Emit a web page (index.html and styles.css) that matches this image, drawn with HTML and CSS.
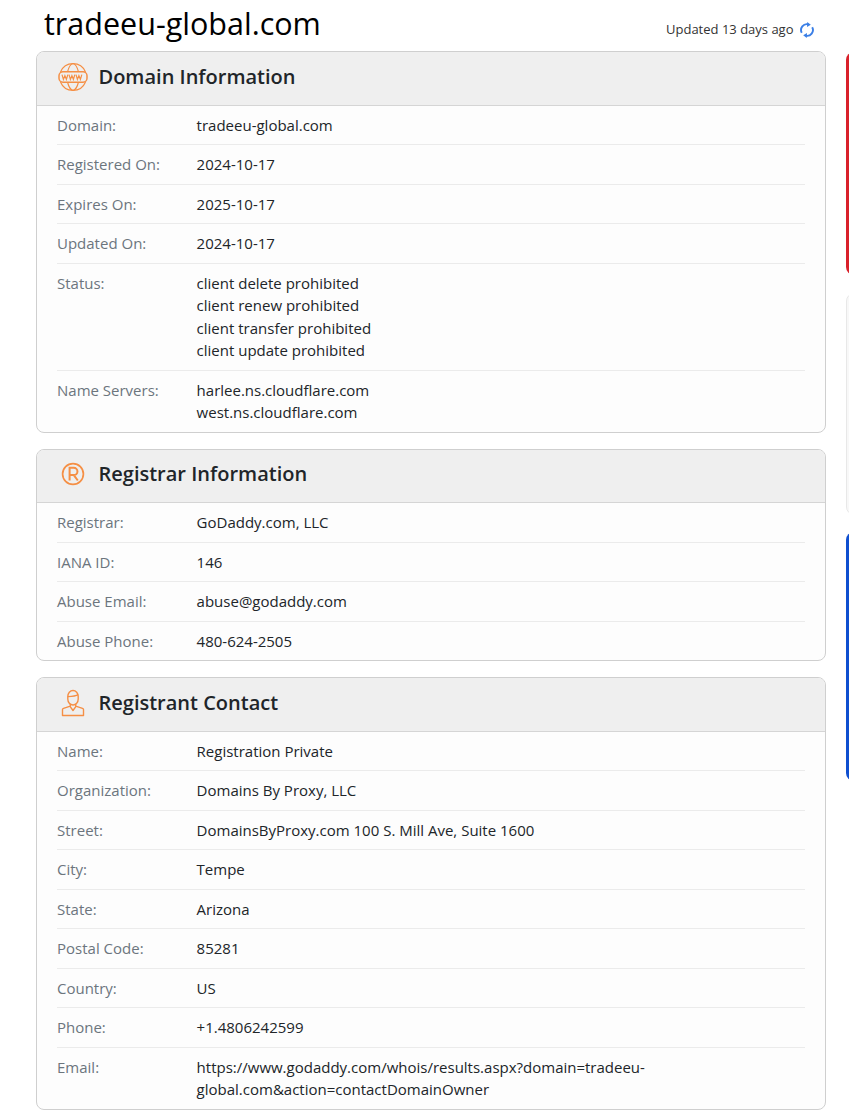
FILE: index.html
```html
<!DOCTYPE html>
<html lang="en">
<head>
<meta charset="utf-8">
<title>tradeeu-global.com</title>
<link rel="stylesheet" href="styles.css">
</head>
<body>
<div class="page">
  <main class="main">
    <header class="top">
      <h1 class="title">tradeeu-global.com</h1>
      <div class="updated">Updated 13 days ago
        <svg class="refresh" viewBox="0 0 16 16" width="16" height="16" fill="none" stroke="#3b7fe6" stroke-width="1.9">
          <path d="M2.800 10.800A5.800 5.800 0 0 1 9.400 2.400"/>
          <path d="M13.200 5.200A5.800 5.800 0 0 1 6.600 13.600"/>
          <path d="M8.200 0l3.600 2.700-3.800 2.300z" fill="#3b7fe6" stroke="none"/>
          <path d="M7.800 16l-3.600-2.700 3.800-2.300z" fill="#3b7fe6" stroke="none"/>
        </svg>
      </div>
    </header>

    <section class="card">
      <div class="card-head">
        <svg class="icon" viewBox="0 0 30 30" width="30" height="30" fill="none" stroke="#f58f45" stroke-width="1.2">
          <path d="M2.500 10a13.500 13.500 0 0 1 25 0M2.500 20a13.500 13.500 0 0 0 25 0"/>
          <path d="M9.500 10c1-4 3-8 5.500-8.500 2.500.5 4.500 4.500 5.500 8.500M9.500 20c1 4 3 8 5.500 8.500 2.500-.5 4.500-4.500 5.500-8.500"/>
          <rect x="1" y="9.800" width="28" height="10.400" rx="4" stroke-width="1.500"/>
          <path d="M4 12.600l1.400 4.800 1.500-3.800 1.500 3.800 1.400-4.800M11 12.600l1.400 4.800 1.500-3.800 1.500 3.800 1.400-4.800M18 12.600l1.400 4.800 1.500-3.800 1.500 3.800 1.400-4.800" stroke-width="1.200"/>
        </svg>
        <h2 class="card-title">Domain Information</h2>
      </div>
      <div class="rows">
        <div class="row"><div class="label">Domain:</div><div class="value">tradeeu-global.com</div></div>
        <div class="row"><div class="label">Registered On:</div><div class="value">2024-10-17</div></div>
        <div class="row"><div class="label">Expires On:</div><div class="value">2025-10-17</div></div>
        <div class="row"><div class="label">Updated On:</div><div class="value">2024-10-17</div></div>
        <div class="row"><div class="label">Status:</div><div class="value">client delete prohibited<br>client renew prohibited<br>client transfer prohibited<br>client update prohibited</div></div>
        <div class="row"><div class="label">Name Servers:</div><div class="value">harlee.ns.cloudflare.com<br>west.ns.cloudflare.com</div></div>
      </div>
    </section>

    <section class="card">
      <div class="card-head">
        <svg class="icon" viewBox="0 0 30 30" width="30" height="30" fill="none" stroke="#f58f45" stroke-width="1.700">
          <circle cx="15" cy="15" r="10.400"/>
          <path d="M11.600 21.500V8.800h4.200a3.600 3.600 0 0 1 0 7.300h-4.200M15.800 16.100l4 5.400" stroke-width="2"/>
        </svg>
        <h2 class="card-title">Registrar Information</h2>
      </div>
      <div class="rows">
        <div class="row"><div class="label">Registrar:</div><div class="value">GoDaddy.com, LLC</div></div>
        <div class="row"><div class="label">IANA ID:</div><div class="value">146</div></div>
        <div class="row"><div class="label">Abuse Email:</div><div class="value">abuse@godaddy.com</div></div>
        <div class="row"><div class="label">Abuse Phone:</div><div class="value">480-624-2505</div></div>
      </div>
    </section>

    <section class="card">
      <div class="card-head">
        <svg class="icon" viewBox="0 0 30 30" width="30" height="30" fill="none" stroke="#f58f45" stroke-width="1.400" stroke-linejoin="round">
          <path d="M9.800 8.500c0-3.400 2.300-6 5.200-6s5.200 2.600 5.200 6v2.500c0 3.400-2.300 6-5.200 6s-5.200-2.600-5.200-6z"/>
          <path d="M9.800 8.600c3-.1 7.400-.2 10.400-2"/>
          <path d="M12.300 16v2.200l-6.800 2.100c-.6.2-1 .7-1 1.300v5.900h21v-5.900c0-.6-.4-1.100-1-1.300l-6.800-2.100V16"/>
          <path d="M12 18.300l3 4.200 3-4.200"/>
        </svg>
        <h2 class="card-title">Registrant Contact</h2>
      </div>
      <div class="rows">
        <div class="row"><div class="label">Name:</div><div class="value">Registration Private</div></div>
        <div class="row"><div class="label">Organization:</div><div class="value">Domains By Proxy, LLC</div></div>
        <div class="row"><div class="label">Street:</div><div class="value">DomainsByProxy.com 100 S. Mill Ave, Suite 1600</div></div>
        <div class="row"><div class="label">City:</div><div class="value">Tempe</div></div>
        <div class="row"><div class="label">State:</div><div class="value">Arizona</div></div>
        <div class="row"><div class="label">Postal Code:</div><div class="value">85281</div></div>
        <div class="row"><div class="label">Country:</div><div class="value">US</div></div>
        <div class="row"><div class="label">Phone:</div><div class="value">+1.4806242599</div></div>
        <div class="row"><div class="label">Email:</div><div class="value">https://www.godaddy.com/whois/results.aspx?domain=tradeeu-global.com&amp;action=contactDomainOwner</div></div>
      </div>
    </section>
  </main>
  <aside class="side">
    <div class="panel panel-red"></div>
    <div class="panel panel-gray"></div>
    <div class="panel panel-blue"></div>
  </aside>
</div>
</body>
</html>
```
FILE: styles.css
```css
html, body {
  margin: 0;
  padding: 0;
  background: #fff;
  overflow: hidden;
}
body {
  font-family: "Open Sans", "Liberation Sans", sans-serif;
  font-size: 15px;
  line-height: 22.5px;
  color: #212529;
}
.page {
  display: flex;
  gap: 20px;
  padding-left: 36px;
}
.main {
  width: 790px;
  flex: none;
  display: flex;
  flex-direction: column;
  gap: 16px;
}
.top {
  display: flex;
  justify-content: space-between;
  align-items: flex-end;
  height: 51px;
  margin-bottom: -16px;
  padding: 0 11.5px 0 8px;
  box-sizing: border-box;
}
.title {
  margin: 0;
  font-size: 30.5px;
  font-weight: 400;
  line-height: 46px;
  color: #000;
  align-self: flex-start;
}
.updated {
  display: flex;
  align-items: center;
  gap: 5px;
  font-size: 13px;
  line-height: 20px;
  color: #333;
  padding-bottom: 12px;
}
.refresh {
  flex: none;
  margin-top: 1px;
}
.card {
  border: 1px solid #cfcfcf;
  border-radius: 8px;
  background: #fdfdfd;
  overflow: hidden;
}
.card-head {
  display: flex;
  align-items: center;
  gap: 10.5px;
  height: 53.6px;
  padding: 0 0 3px 21px;
  background: #efefef;
  border-bottom: 1px solid #d5d5d5;
  box-sizing: border-box;
}
.icon {
  flex: none;
}
.card-title {
  margin: 0;
  font-size: 20px;
  font-weight: 600;
  line-height: 28px;
  color: #212529;
}
.rows {
  padding: 0 20px;
}
.row {
  display: grid;
  grid-template-columns: 139.6px 1fr;
  padding: 8px 0;
  border-bottom: 1px solid #ebebeb;
}
.row:last-child {
  border-bottom: 0;
}
.label {
  color: #6c757d;
}
.value {
  color: #212529;
}
.side {
  flex: none;
  width: 3px;
  overflow: hidden;
  display: flex;
  flex-direction: column;
  padding-top: 52px;
  gap: 17.5px;
}
.panel {
  flex: none;
  width: 60px;
  border-radius: 8px;
  box-sizing: border-box;
}
.panel-red {
  height: 223px;
  background: #d9202a;
}
.panel-gray {
  height: 222px;
  background: #f8f8f8;
  border: 1px solid #e8e8e8;
}
.panel-blue {
  height: 249px;
  background: #0f4fd0;
}
```
